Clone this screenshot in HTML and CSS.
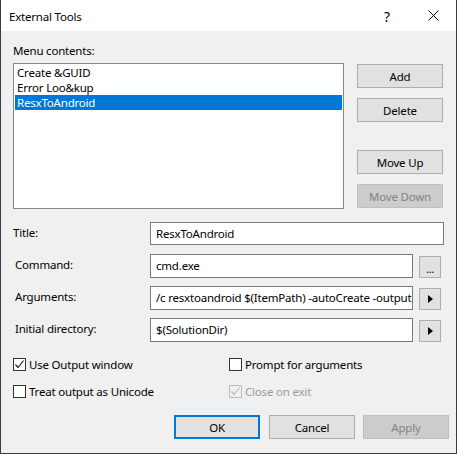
FILE: index.html
```html
<!DOCTYPE html>
<html>
<head>
<meta charset="utf-8">
<link rel="stylesheet" href="styles.css">
</head>
<body>
<div class="window">
  <div class="titlebar">
    <span class="title">External Tools</span>
    <div class="caption">
      <span class="cap-btn help">?</span>
      <span class="cap-btn close">
        <svg width="11" height="11" viewBox="0 0 11 11"><path d="M0.5 0.5 L10.5 10.5 M10.5 0.5 L0.5 10.5" stroke="#000" stroke-width="1" fill="none"/></svg>
      </span>
    </div>
  </div>
  <div class="content">
    <div class="lbl-menu">Menu contents:</div>
    <div class="list-row">
      <div class="listbox">
        <div class="item">Create &amp;GUID</div>
        <div class="item">Error Loo&amp;kup</div>
        <div class="item selected">ResxToAndroid</div>
      </div>
      <div class="side-buttons">
        <button class="btn b-add">Add</button>
        <button class="btn b-delete">Delete</button>
        <button class="btn b-up">Move Up</button>
        <button class="btn b-down disabled">Move Down</button>
      </div>
    </div>
    <div class="form">
      <label class="flabel first">Title:</label>
      <div class="input wide">ResxToAndroid</div>
      <label class="flabel">Command:</label>
      <div class="input">cmd.exe</div>
      <button class="mini dots">...</button>
      <label class="flabel">Arguments:</label>
      <div class="input">/c resxtoandroid $(ItemPath) -autoCreate -output $(ProjectDir)</div>
      <button class="mini"><span class="tri"></span></button>
      <label class="flabel">Initial directory:</label>
      <div class="input">$(SolutionDir)</div>
      <button class="mini"><span class="tri"></span></button>
    </div>
    <div class="checks">
      <div class="chk"><span class="box"><svg width="11" height="11" viewBox="0 0 11 11"><path d="M1.5 5.5 L4 8.5 L9.5 1.5" stroke="#222" stroke-width="1.2" fill="none"/></svg></span>Use Output window</div>
      <div class="chk"><span class="box"></span>Prompt for arguments</div>
      <div class="chk"><span class="box"></span>Treat output as Unicode</div>
      <div class="chk dis"><span class="box"><svg width="11" height="11" viewBox="0 0 11 11"><path d="M1.5 5.5 L4 8.5 L9.5 1.5" stroke="#bcbcbc" stroke-width="1.2" fill="none"/></svg></span>Close on exit</div>
    </div>
    <div class="actions">
      <button class="btn default">OK</button>
      <button class="btn b-cancel">Cancel</button>
      <button class="btn b-apply disabled">Apply</button>
    </div>
  </div>
</div>
</body>
</html>
```
FILE: styles.css
```css
html, body {
  margin: 0;
  padding: 0;
  background: #f0f0f0;
}
body {
  font-family: "Noto Sans", "Open Sans", sans-serif;
  font-size: 11.5px;
  letter-spacing: -0.2px;
  color: #000;
}
.window {
  width: 457px;
  height: 454px;
  box-sizing: border-box;
  border: 1px solid #3c3c3c;
  border-top: none;
  background: #f0f0f0;
  display: flex;
  flex-direction: column;
  overflow: hidden;
}
.titlebar {
  height: 31px;
  flex: none;
  background: #fff;
  display: flex;
  align-items: center;
  padding-left: 8px;
}
.title {
  line-height: 15px;
  padding-top: 1px;
}
.caption {
  margin-left: auto;
  display: flex;
  height: 31px;
}
.cap-btn {
  width: 46px;
  height: 31px;
  display: flex;
  align-items: center;
  justify-content: center;
}
.help {
  font-size: 14px;
  padding-top: 1px;
  box-sizing: border-box;
}
.content {
  display: flex;
  flex-direction: column;
  padding-left: 12px;
}
.lbl-menu {
  margin-top: 12px;
  line-height: 15px;
  height: 15px;
  margin-bottom: 5px;
}
.list-row {
  display: flex;
  align-items: flex-start;
}
.listbox {
  width: 331px;
  height: 146px;
  box-sizing: border-box;
  border: 1px solid #828790;
  background: #fff;
  padding: 1px 1px;
}
.item {
  height: 15px;
  line-height: 15px;
  padding-left: 2px;
  white-space: nowrap;
  overflow: hidden;
}
.item.selected {
  background: #0078d7;
  color: #fff;
}
.side-buttons {
  display: flex;
  flex-direction: column;
  margin-left: 13px;
}
.btn {
  width: 86px;
  height: 24px;
  box-sizing: border-box;
  border: 1px solid #adadad;
  background: #e1e1e1;
  font-family: inherit;
  font-size: 11.5px;
  letter-spacing: -0.2px;
  color: #000;
  padding: 0;
  margin: 0;
  line-height: 15px;
}
.btn.disabled {
  background: #cccccc;
  border-color: #bfbfbf;
  color: #838383;
}
.btn.default {
  border: 2px solid #0078d7;
}
.b-add { margin-top: 1px; }
.b-delete { margin-top: 10px; }
.b-up { margin-top: 28px; }
.b-down { margin-top: 10px; }
.form {
  display: grid;
  grid-template-columns: 137px 263px 6px 22px 3px;
  grid-auto-rows: 24px;
  row-gap: 8px;
  margin-top: 13px;
}
.flabel {
  grid-column: 1;
  padding-left: 2px;
  padding-top: 3px;
  line-height: 15px;
}
.flabel.first {
  padding-left: 0;
  padding-top: 3px;
}
.input {
  grid-column: 2;
  box-sizing: border-box;
  height: 24px;
  border: 1px solid #7a7a7a;
  background: #fff;
  padding: 0 0 0 5px;
  line-height: 22px;
  white-space: nowrap;
  overflow: hidden;
}
.input.wide {
  grid-column: 2 / 6;
  height: 23px;
  line-height: 21px;
}
.mini {
  grid-column: 4;
  align-self: end;
  width: 22px;
  height: 22px;
  box-sizing: border-box;
  border: 1px solid #adadad;
  background: #e1e1e1;
  padding: 0;
  margin: 0;
  display: flex;
  align-items: center;
  justify-content: center;
  font-family: inherit;
  font-size: 11px;
  color: #000;
}
.mini.dots {
  line-height: 10px;
  padding-top: 4px;
  letter-spacing: -0.5px;
}
.tri {
  display: block;
  width: 0;
  height: 0;
  border-top: 4px solid transparent;
  border-bottom: 4px solid transparent;
  border-left: 5px solid #000;
  margin-left: 1px;
}
.checks {
  display: grid;
  grid-template-columns: 216px 200px;
  grid-auto-rows: 15px;
  row-gap: 12px;
  margin-top: 15px;
}
.chk {
  display: flex;
  align-items: center;
  line-height: 15px;
  white-space: nowrap;
}
.box {
  width: 13px;
  height: 13px;
  box-sizing: border-box;
  border: 1px solid #333;
  background: #fff;
  margin-right: 3px;
  display: flex;
  align-items: center;
  justify-content: center;
  flex: none;
}
.chk.dis {
  color: #9a9a9a;
}
.chk.dis .box {
  border-color: #bcbcbc;
  background: #f0f0f0;
}
.actions {
  display: flex;
  margin-top: 16px;
  padding-left: 161px;
}
.b-cancel { margin-left: 9px; }
.b-apply { margin-left: 8px; }
```
